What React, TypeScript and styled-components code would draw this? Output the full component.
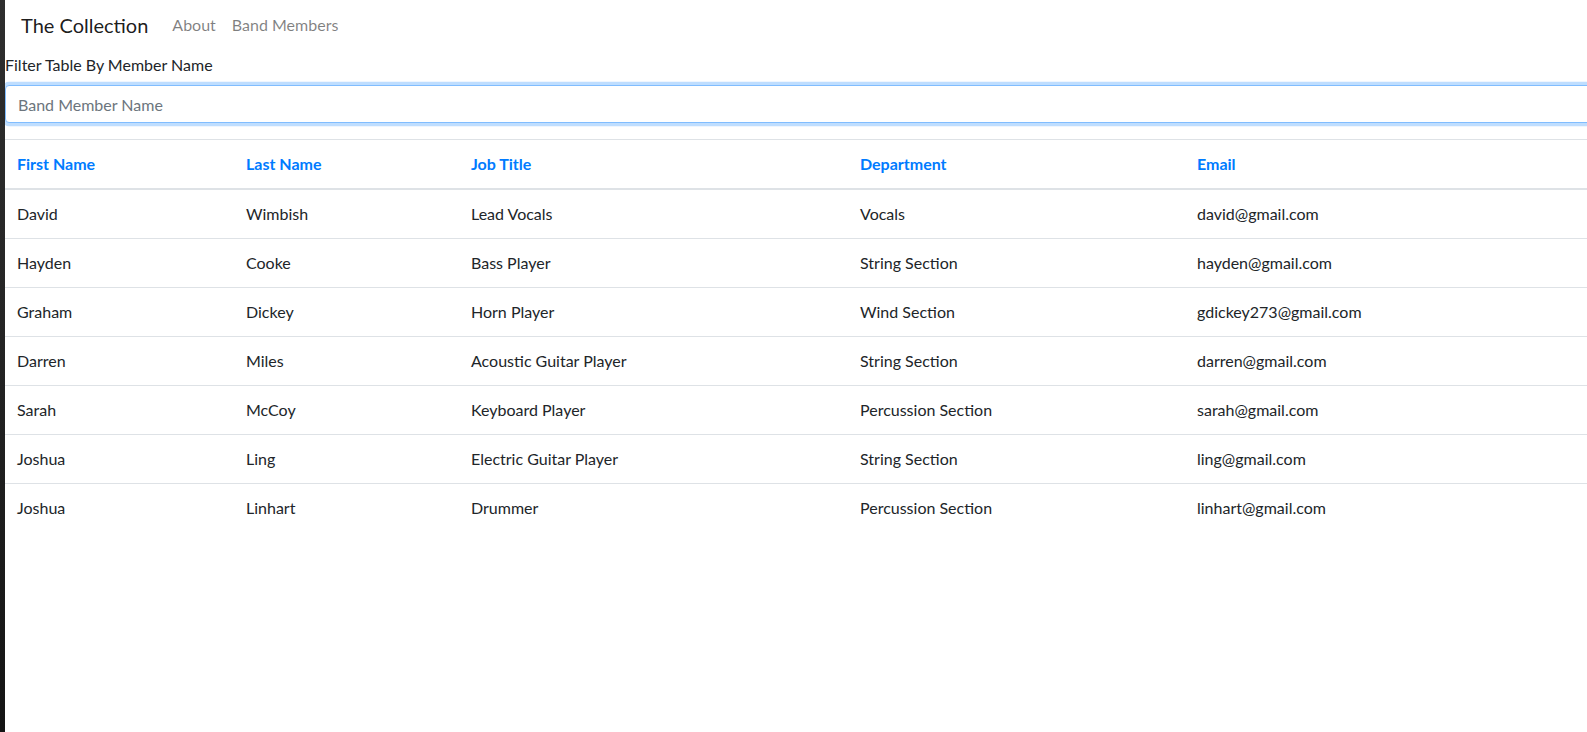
import React from "react";
import styled, { createGlobalStyle } from "styled-components";

const GlobalStyle = createGlobalStyle`
  html, body {
    margin: 0;
    padding: 0;
    background: #ffffff;
    overflow: hidden;
  }
  body {
    font-family: "Lato", "Liberation Sans", sans-serif;
    font-size: 16px;
    line-height: 1.5;
    color: #212529;
  }
  *, *::before, *::after { box-sizing: border-box; }
`;

const Shell = styled.div`
  display: flex;
  min-height: 100vh;
  width: 100%;
`;

const EdgeStrip = styled.div`
  flex: 0 0 5px;
  background: linear-gradient(180deg, #2e2e2e 0%, #262626 40%, #141414 100%);
`;

const Main = styled.main`
  flex: 1 1 auto;
  min-width: 0;
  overflow: hidden;
`;

const Navbar = styled.nav`
  display: flex;
  align-items: center;
  padding: 5px 16px 8px;
`;

const Brand = styled.a`
  display: inline-block;
  padding: 5px 0;
  margin-right: 16px;
  font-size: 20px;
  line-height: 30px;
  color: rgba(0, 0, 0, 0.9);
  text-decoration: none;
  white-space: nowrap;
`;

const NavList = styled.ul`
  display: flex;
  list-style: none;
  margin: 0;
  padding: 0;
`;

const NavLink = styled.a`
  display: block;
  padding: 8px;
  line-height: 24px;
  color: rgba(0, 0, 0, 0.5);
  text-decoration: none;
`;

const Wide = styled.div`
  width: 1640px;
`;

const FormGroup = styled.div`
  margin-bottom: 16px;
`;

const Label = styled.label`
  display: inline-block;
  margin-bottom: 8px;
`;

const Input = styled.input`
  display: block;
  width: 100%;
  height: 38px;
  padding: 6px 12px;
  font-family: inherit;
  font-size: 16px;
  line-height: 24px;
  color: #495057;
  background: #fff;
  border: 1px solid #80bdff;
  border-radius: 4px;
  outline: 0;
  box-shadow: 0 0 0 3.2px rgba(0, 123, 255, 0.25);
  &::placeholder {
    color: #6c757d;
    opacity: 1;
  }
`;

const Table = styled.table`
  width: 100%;
  border-collapse: collapse;
  table-layout: fixed;
  color: #212529;
`;

const HeadCell = styled.th`
  padding: 12px;
  text-align: left;
  vertical-align: bottom;
  font-weight: 700;
  color: #007bff;
  border-top: 1px solid #dee2e6;
  border-bottom: 2px solid #dee2e6;
`;

const Cell = styled.td`
  padding: 12px;
  vertical-align: top;
  border-top: 1px solid #dee2e6;
`;

type Member = {
  first: string;
  last: string;
  title: string;
  dept: string;
  email: string;
};

const members: Member[] = [
  { first: "David", last: "Wimbish", title: "Lead Vocals", dept: "Vocals", email: "david@gmail.com" },
  { first: "Hayden", last: "Cooke", title: "Bass Player", dept: "String Section", email: "hayden@gmail.com" },
  { first: "Graham", last: "Dickey", title: "Horn Player", dept: "Wind Section", email: "gdickey273@gmail.com" },
  { first: "Darren", last: "Miles", title: "Acoustic Guitar Player", dept: "String Section", email: "darren@gmail.com" },
  { first: "Sarah", last: "McCoy", title: "Keyboard Player", dept: "Percussion Section", email: "sarah@gmail.com" },
  { first: "Joshua", last: "Ling", title: "Electric Guitar Player", dept: "String Section", email: "ling@gmail.com" },
  { first: "Joshua", last: "Linhart", title: "Drummer", dept: "Percussion Section", email: "linhart@gmail.com" },
];

const columns = [
  { label: "First Name", width: 229 },
  { label: "Last Name", width: 225 },
  { label: "Job Title", width: 389 },
  { label: "Department", width: 337 },
  { label: "Email", width: undefined as number | undefined },
];

export default function App() {
  const [query, setQuery] = React.useState("");
  const rows = members.filter((m) =>
    `${m.first} ${m.last}`.toLowerCase().includes(query.toLowerCase())
  );
  return (
    <>
      <GlobalStyle />
      <Shell>
        <EdgeStrip />
        <Main>
          <Navbar>
            <Brand href="#">The Collection</Brand>
            <NavList>
              <li><NavLink href="#">About</NavLink></li>
              <li><NavLink href="#">Band Members</NavLink></li>
            </NavList>
          </Navbar>
          <Wide>
            <FormGroup>
              <Label htmlFor="member-filter">Filter Table By Member Name</Label>
              <Input
                id="member-filter"
                autoFocus
                placeholder="Band Member Name"
                value={query}
                onChange={(e) => setQuery(e.target.value)}
              />
            </FormGroup>
            <Table>
              <colgroup>
                {columns.map((c) => (
                  <col key={c.label} style={c.width ? { width: c.width } : undefined} />
                ))}
              </colgroup>
              <thead>
                <tr>
                  {columns.map((c) => (
                    <HeadCell key={c.label}>{c.label}</HeadCell>
                  ))}
                </tr>
              </thead>
              <tbody>
                {rows.map((m, i) => (
                  <tr key={i}>
                    <Cell>{m.first}</Cell>
                    <Cell>{m.last}</Cell>
                    <Cell>{m.title}</Cell>
                    <Cell>{m.dept}</Cell>
                    <Cell>{m.email}</Cell>
                  </tr>
                ))}
              </tbody>
            </Table>
          </Wide>
        </Main>
      </Shell>
    </>
  );
}
